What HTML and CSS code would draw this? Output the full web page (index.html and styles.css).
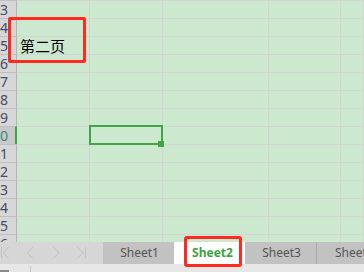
FILE: index.html
```html
<!DOCTYPE html>
<html>
<head>
<meta charset="utf-8">
<link rel="stylesheet" href="styles.css">
</head>
<body>
<div class="app">
  <div class="sheet">
    <div class="row"><div class="hd"><span>13</span></div><div class="c a"></div><div class="c b"></div><div class="c cc"></div><div class="c d"></div><div class="c e"></div></div>
    <div class="row"><div class="hd"><span>14</span></div><div class="c a"></div><div class="c b"></div><div class="c cc"></div><div class="c d"></div><div class="c e"></div></div>
    <div class="row"><div class="hd"><span>15</span></div><div class="c a txt">第二页</div><div class="c b"></div><div class="c cc"></div><div class="c d"></div><div class="c e"></div></div>
    <div class="row"><div class="hd"><span>16</span></div><div class="c a"></div><div class="c b"></div><div class="c cc"></div><div class="c d"></div><div class="c e"></div></div>
    <div class="row"><div class="hd"><span>17</span></div><div class="c a"></div><div class="c b"></div><div class="c cc"></div><div class="c d"></div><div class="c e"></div></div>
    <div class="row"><div class="hd"><span>18</span></div><div class="c a"></div><div class="c b"></div><div class="c cc"></div><div class="c d"></div><div class="c e"></div></div>
    <div class="row"><div class="hd"><span>19</span></div><div class="c a"></div><div class="c b"></div><div class="c cc"></div><div class="c d"></div><div class="c e"></div></div>
    <div class="row"><div class="hd sel"><span>20</span></div><div class="c a"></div><div class="c b"><div class="cursor"><div class="handle"></div></div></div><div class="c cc"></div><div class="c d"></div><div class="c e"></div></div>
    <div class="row"><div class="hd"><span>21</span></div><div class="c a"></div><div class="c b"></div><div class="c cc"></div><div class="c d"></div><div class="c e"></div></div>
    <div class="row"><div class="hd"><span>22</span></div><div class="c a"></div><div class="c b"></div><div class="c cc"></div><div class="c d"></div><div class="c e"></div></div>
    <div class="row"><div class="hd"><span>23</span></div><div class="c a"></div><div class="c b"></div><div class="c cc"></div><div class="c d"></div><div class="c e"></div></div>
    <div class="row"><div class="hd"><span>24</span></div><div class="c a"></div><div class="c b"></div><div class="c cc"></div><div class="c d"></div><div class="c e"></div></div>
    <div class="row"><div class="hd"><span>25</span></div><div class="c a"></div><div class="c b"></div><div class="c cc"></div><div class="c d"></div><div class="c e"></div></div>
    <div class="row"><div class="hd"><span>26</span></div><div class="c a"></div><div class="c b"></div><div class="c cc"></div><div class="c d"></div><div class="c e"></div></div>
    <div class="mark"></div>
  </div>
  <div class="tabbar">
    <div class="nav">
      <svg width="103" height="22" viewBox="0 0 103 22">
        <g fill="none" stroke="#c3c3c3" stroke-width="1">
          <path d="M1.5 5V16.5"/>
          <path d="M8.5 5L3.5 10.75L8.5 16.5"/>
          <path d="M33 5L27 10.75L33 16.5"/>
          <path d="M53 5L59 10.75L53 16.5"/>
          <path d="M77 5L83 10.75L77 16.5"/>
          <path d="M85.5 5V16.5"/>
        </g>
      </svg>
    </div>
    <div class="tab">Sheet1</div>
    <div class="tab active">Sheet2<div class="tabmark"></div></div>
    <div class="tab">Sheet3</div>
    <div class="tab sep">Sheet4</div>
  </div>
  <div class="status">
    <div class="sicon"></div>
    <div class="sline"></div>
  </div>
</div>
</body>
</html>
```
FILE: styles.css
```css
html, body {
  margin: 0;
  padding: 0;
}
body {
  width: 364px;
  height: 272px;
  overflow: hidden;
  font-family: "Noto Sans", "Noto Sans CJK SC", sans-serif;
  background: #e8e8e8;
}
.app {
  display: flex;
  flex-direction: column;
  height: 272px;
}
.sheet {
  position: relative;
  height: 242px;
  overflow: hidden;
  background: #cce8cf;
  flex: none;
}
.row {
  display: flex;
  height: 18px;
}
.hd {
  width: 17px;
  flex: none;
  box-sizing: border-box;
  height: 18px;
  background: #d7d7d7;
  border-top: 1px solid #bfbfbf;
  border-right: 1px solid #b4b4b4;
  display: flex;
  justify-content: flex-end;
  align-items: center;
  overflow: hidden;
  padding-right: 8px;
  font-size: 14px;
  line-height: 17px;
  color: #3f4d66;
}
.hd span {
  flex: none;
  white-space: nowrap;
}
.hd.sel {
  background: #c9c9c9;
  border-right: 2px solid #3fa544;
  padding-right: 7px;
  color: #2f8a7a;
}
.c {
  box-sizing: border-box;
  height: 18px;
  border-top: 1px solid #d2d5d2;
  border-right: 1px solid #d2d5d2;
  flex: none;
}
.a { width: 73px; }
.b { width: 73px; position: relative; }
.cc { width: 106px; }
.d { width: 72px; }
.e { flex: 1; }
.txt {
  font-family: "Noto Sans CJK SC", sans-serif;
  font-size: 15px;
  line-height: 17px;
  padding-left: 3px;
  color: #000;
  white-space: nowrap;
}
.cursor {
  position: absolute;
  left: -1px;
  top: -2px;
  width: 74px;
  height: 20px;
  box-sizing: border-box;
  border: 2px solid #41a446;
  z-index: 2;
}
.handle {
  position: absolute;
  left: 67px;
  top: 14px;
  width: 6px;
  height: 6px;
  background: #41a446;
}
.mark {
  position: absolute;
  left: 8px;
  top: 17px;
  width: 78px;
  height: 46px;
  box-sizing: border-box;
  border: 3px solid #ff2a1f;
  border-radius: 2px;
}
.tabbar {
  display: flex;
  height: 22px;
  flex: none;
  background: #c2c2c2;
}
.nav {
  width: 103px;
  flex: none;
  background: #d6d6d6;
  height: 22px;
}
.nav svg {
  display: block;
}
.tab {
  width: 71px;
  flex: none;
  box-sizing: border-box;
  height: 22px;
  background: #c2c2c2;
  color: #555555;
  font-size: 12px;
  line-height: 22px;
  text-align: center;
  white-space: nowrap;
  overflow: visible;
  padding-left: 2px;
}
.tab.active {
  position: relative;
  background: #ffffff;
  color: #3ea33e;
  font-weight: bold;
  padding-left: 6px;
}
.tab.sep {
  border-left: 1px solid #a8a8a8;
  width: 60px;
  overflow: hidden;
  padding-left: 0;
  text-align: left;
  text-indent: 18px;
}
.tabmark {
  position: absolute;
  left: 10px;
  top: -6px;
  width: 58px;
  height: 31px;
  box-sizing: border-box;
  border: 3px solid #ff2a1f;
  border-radius: 3px;
  z-index: 3;
}
.status {
  position: relative;
  height: 8px;
  flex: none;
  background: #e7e7e7;
  display: flex;
}
.sicon {
  width: 9px;
  height: 2px;
  margin-top: 6px;
  background: #8a8a8a;
  flex: none;
}
.sline {
  width: 1px;
  height: 6px;
  margin-top: 2px;
  margin-left: 21px;
  background: #c9c9c9;
  flex: none;
}
```
